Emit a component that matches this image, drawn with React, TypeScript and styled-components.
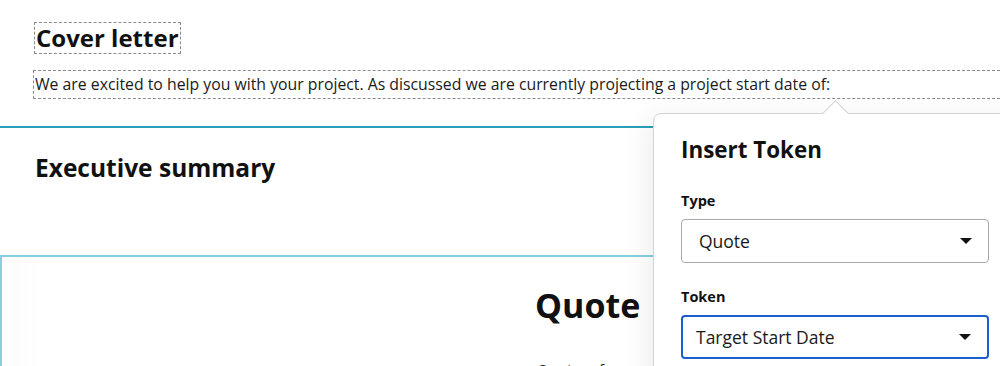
import React from 'react';
import styled, { createGlobalStyle } from 'styled-components';

const GlobalStyle = createGlobalStyle`
  html, body {
    margin: 0;
    padding: 0;
    background: #ffffff;
  }
  body {
    font-family: 'Open Sans', 'Noto Sans', sans-serif;
    color: #111111;
  }
`;

const Page = styled.div`
  position: relative;
  width: 1000px;
  height: 366px;
  overflow: hidden;
  background: #ffffff;
`;

const CoverSection = styled.section`
  padding: 22px 0 0 34px;
  height: 126px;
  box-sizing: border-box;
`;

const EditableHeading = styled.h2`
  display: inline-block;
  margin: 0;
  padding: 0 1px;
  border: 1px dashed #8a8a8a;
  font-size: 24px;
  line-height: 30px;
  font-weight: 700;
`;

const EditableText = styled.p`
  margin: 16px -20px 0 -1px;
  padding: 0 1px;
  border: 1px dashed #8a8a8a;
  font-size: 15.8px;
  line-height: 27px;
  color: #1a1a1a;
  white-space: nowrap;
`;

const SummarySection = styled.section`
  border-top: 2px solid #2b9fb8;
  height: 129px;
  box-sizing: border-box;
  padding: 25px 0 0 35px;
`;

const SectionTitle = styled.h2`
  margin: 0;
  font-size: 24.5px;
  line-height: 30px;
  font-weight: 700;
`;

const QuoteBox = styled.section`
  border-top: 2px solid #86cfe0;
  border-left: 2px solid #86cfe0;
  height: 200px;
  box-sizing: border-box;
  padding: 26px 0 0 533px;
  background: linear-gradient(90deg, #ffffff 0px, #fcfcfc 14px, #ffffff 40px);
`;

const QuoteTitle = styled.h1`
  margin: 0;
  font-size: 34px;
  line-height: 44px;
  font-weight: 700;
`;

const QuoteRef = styled.div`
  margin-top: 32px;
  padding-left: 2px;
  font-size: 15px;
  line-height: 20px;
  color: #222222;
`;

const Popover = styled.div`
  position: absolute;
  left: 653px;
  top: 113px;
  width: 400px;
  height: 300px;
  box-sizing: border-box;
  padding: 22px 0 0 27px;
  background: #ffffff;
  border: 1px solid #d4d4d4;
  border-radius: 8px 0 0 0;
  box-shadow: -6px 4px 28px rgba(0, 0, 0, 0.07);
`;

const Arrow = styled.span`
  position: absolute;
  left: 172px;
  top: -10px;
  width: 18px;
  height: 18px;
  background: #ffffff;
  border-top: 1px solid #d4d4d4;
  border-left: 1px solid #d4d4d4;
  transform: rotate(45deg);
`;

const PopoverTitle = styled.h3`
  margin: 0 0 28px;
  font-size: 22.4px;
  line-height: 28px;
  font-weight: 700;
`;

const Field = styled.div`
  width: 308px;
  margin-bottom: 25px;
`;

const Label = styled.div`
  font-size: 14.5px;
  line-height: 18px;
  font-weight: 700;
  margin-bottom: 9px;
`;

const Select = styled.div<{ $focused?: boolean }>`
  display: flex;
  align-items: center;
  justify-content: space-between;
  height: 44px;
  box-sizing: border-box;
  padding: 0 16px 0 ${p => (p.$focused ? '13px' : '17px')};
  border: ${p => (p.$focused ? '2px solid #1b5fcf' : '1px solid #a9a9a9')};
  border-radius: 4px;
  font-size: 17.5px;
  color: #1a1a1a;
  background: #ffffff;
`;

const Caret = styled.span`
  width: 0;
  height: 0;
  border-left: 6px solid transparent;
  border-right: 6px solid transparent;
  border-top: 6px solid #111111;
`;

const App: React.FC = () => {
  return (
    <Page>
      <GlobalStyle />
      <CoverSection>
        <EditableHeading>Cover letter</EditableHeading>
        <EditableText>
          We are excited to help you with your project. As discussed we are currently projecting a project start date of:
        </EditableText>
      </CoverSection>
      <SummarySection>
        <SectionTitle>Executive summary</SectionTitle>
      </SummarySection>
      <QuoteBox>
        <QuoteTitle>Quote</QuoteTitle>
        <QuoteRef>Quote ref</QuoteRef>
      </QuoteBox>

      <Popover>
        <Arrow />
        <PopoverTitle>Insert Token</PopoverTitle>
        <Field>
          <Label>Type</Label>
          <Select>
            Quote
            <Caret />
          </Select>
        </Field>
        <Field>
          <Label>Token</Label>
          <Select $focused>
            Target Start Date
            <Caret />
          </Select>
        </Field>
      </Popover>
    </Page>
  );
};

export default App;
